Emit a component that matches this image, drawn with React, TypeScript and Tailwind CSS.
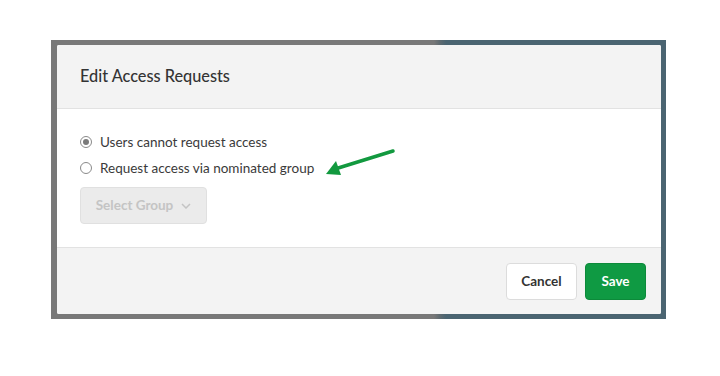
import React from 'react'

const font = { fontFamily: 'Lato, "Open Sans", sans-serif' }

const Radio = ({ checked, label }: { checked?: boolean; label: string }) => (
  <label className="flex items-center gap-[8px] h-[20px] text-[13.5px] text-[#3a3a3a]">
    <span className="w-[12px] h-[12px] rounded-full border border-[#8a8a8a] bg-white flex items-center justify-center">
      {checked && <span className="w-[6px] h-[6px] rounded-full bg-[#7a7a7a]" />}
    </span>
    {label}
  </label>
)

const App = () => {
  return (
    <div className="w-[720px] h-[376px] bg-white pt-[40px] pl-[51px]" style={font}>
      <div className="w-[615px] h-[279px] pt-[5px] pl-[6px] pr-[5px] bg-[linear-gradient(to_right,#787878_0,#787878_383px,#5e6a70_389px,#4a6471_395px)]">
        <div className="relative h-[269px] bg-white rounded-[2px] flex flex-col overflow-hidden">
          <div className="h-[64px] bg-[#f3f3f3] border-b border-[#e2e2e2] flex items-center px-[23px]">
            <h2 className="text-[16.3px] text-[#333] font-medium">Edit Access Requests</h2>
          </div>
          <div className="flex-1 px-[23px] pt-[23px] flex flex-col gap-[6px]">
            <Radio checked label="Users cannot request access" />
            <Radio label="Request access via nominated group" />
            <button className="mt-[3px] w-[127px] h-[37px] rounded-[4px] bg-[#ebebeb] border border-[#e0e0e0] text-[13.5px] font-bold text-[#c4c4c4] flex items-center justify-center gap-[8px]">
              Select Group
              <svg width="10" height="6" viewBox="0 0 10 6" fill="none" stroke="#c4c4c4" strokeWidth="1.5">
                <path d="M1 1l4 4 4-4" />
              </svg>
            </button>
          </div>
          <div className="h-[67px] bg-[#f3f3f3] border-t border-[#e2e2e2] flex items-center justify-end gap-[8px] pr-[15px]">
            <button className="w-[71px] h-[37px] rounded-[4px] bg-white border border-[#dcdcdc] text-[13.5px] font-bold text-[#333]">
              Cancel
            </button>
            <button className="w-[61px] h-[37px] rounded-[4px] bg-[#0f9a43] border border-[#0c8a3a] text-[13.5px] font-bold text-white">
              Save
            </button>
          </div>
          <svg className="absolute left-[262px] top-[100px]" width="80" height="36" viewBox="0 0 80 36">
            <path d="M74 6 L16 24" stroke="#12993f" strokeWidth="3.5" strokeLinecap="round" />
            <path d="M7 29 L17 16 L22 30 Z" fill="#12993f" />
          </svg>
        </div>
      </div>
    </div>
  )
}

export default App
